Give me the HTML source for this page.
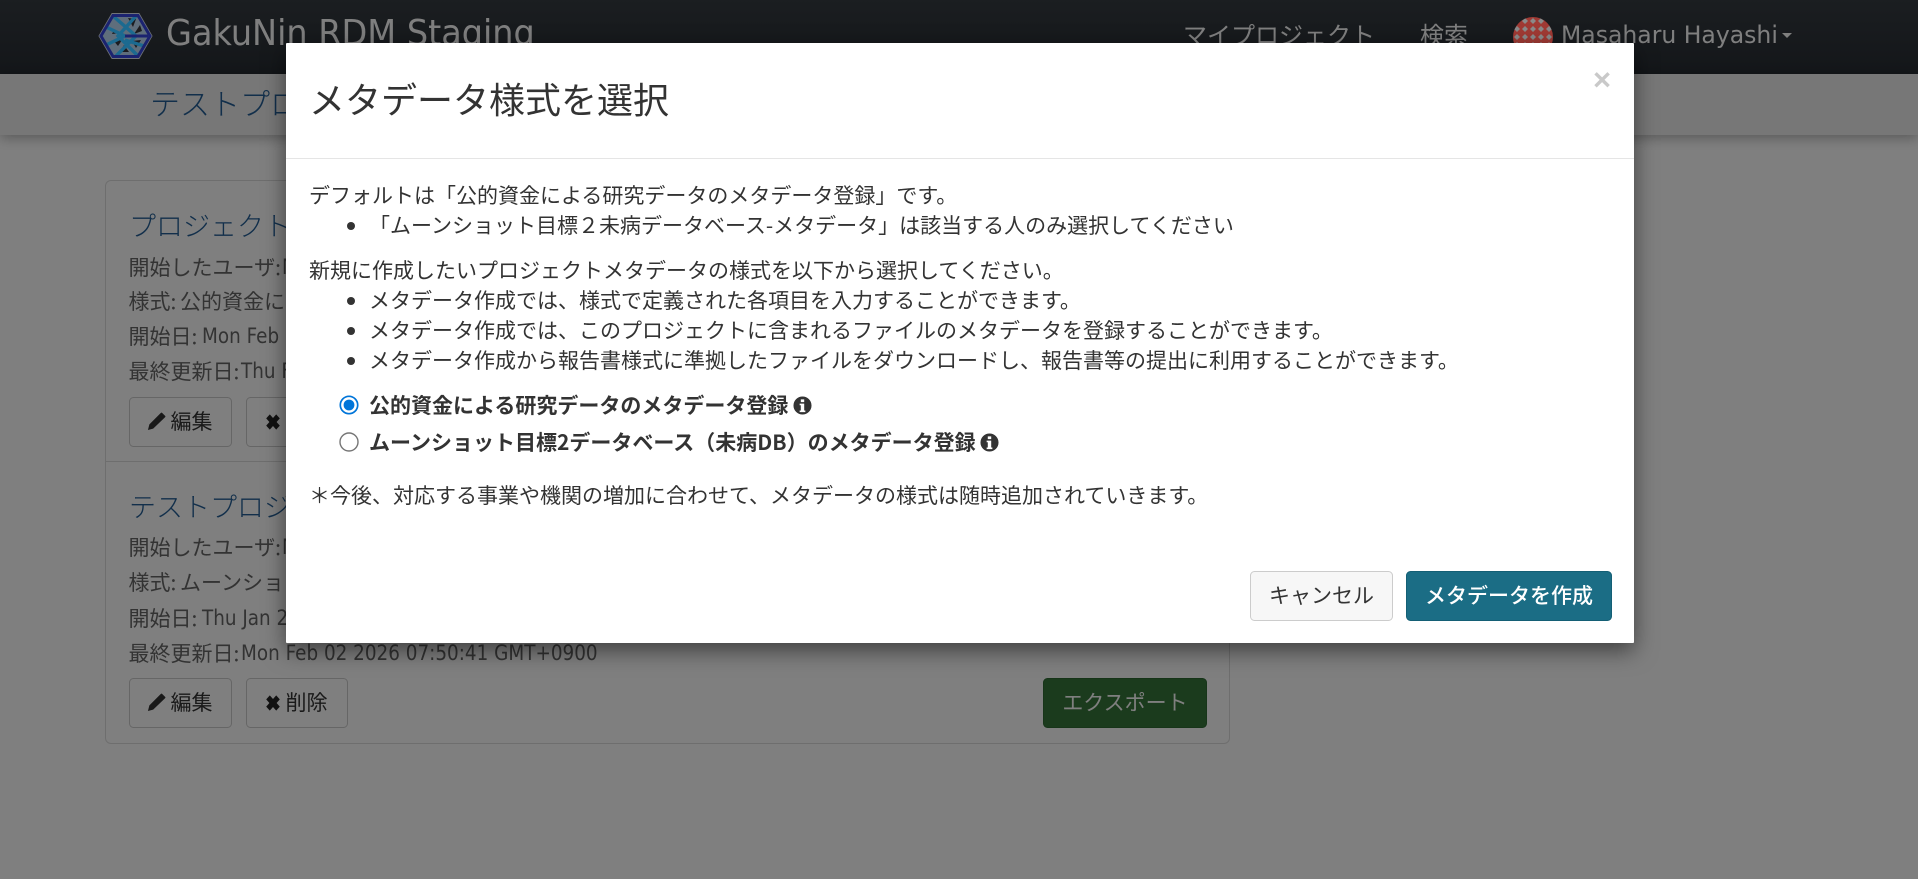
<!DOCTYPE html>
<html lang="ja"><head><meta charset="utf-8"><title>メタデータ様式を選択</title>
<style>
*{box-sizing:border-box}
html,body{margin:0;padding:0;width:1918px;height:879px;overflow:hidden;background:#fff}
body{font-family:"Liberation Sans","Noto Sans CJK JP",sans-serif;font-size:21px;color:#333;position:relative}
.t{position:absolute;white-space:nowrap;line-height:30px;font-family:"Noto Sans CJK JP",sans-serif}
.l{font-family:"DejaVu Sans",sans-serif;font-size:20.5px;transform:scaleX(.875);transform-origin:0 50%}
#nav{position:absolute;left:0;top:0;width:1918px;height:74px;background:linear-gradient(#363c42,#282d33)}
#sub{position:absolute;left:0;top:74px;width:1918px;height:61px;background:#eee;box-shadow:0 3px 12px rgba(0,0,0,.3)}
#panel{position:absolute;left:105px;top:180px;width:1125px;height:564px;border:1px solid #ddd;border-radius:6px;background:#fff}
#div{position:absolute;left:105px;top:461px;width:1125px;height:1px;background:#ddd}
.lnk{color:#245f96;font-size:27px;font-weight:300}
.g{color:#666;font-size:21px}
.btn{position:absolute;height:50px;border:1px solid #ccc;border-radius:4.5px;background:#fff;color:#333;font-family:"Noto Sans CJK JP",sans-serif;font-size:21px;line-height:46px;text-align:center;white-space:nowrap}
.btn svg{vertical-align:-2px;margin-right:5px}
.ic{padding-right:2px}
#bd{position:absolute;left:0;top:0;width:1918px;height:879px;background:rgba(0,0,0,.5)}
#modal{position:absolute;left:286px;top:43px;width:1348px;height:600px;background:#fff;border-radius:1px;box-shadow:0 7.5px 22.5px rgba(0,0,0,.5)}
#hr{position:absolute;left:286px;top:158px;width:1348px;height:1px;background:#e5e5e5}
.m{color:#333;font-size:21px}
.b{font-weight:700;color:#333}
.dot{position:absolute;left:347px;width:8px;height:8px;border-radius:50%;background:#333}
</style></head><body>
<div id="nav"></div>
<div class="t" style="left:166px;top:10px;line-height:48px;font-family:'DejaVu Sans',sans-serif;font-size:36px;transform:scaleX(.93);transform-origin:0 50%;color:#fff">GakuNin RDM Staging</div>
<div class="t" style="left:1183px;top:16px;font-size:24px;line-height:36px;color:#fff">マイプロジェクト</div>
<div class="t" style="left:1420px;top:16px;font-size:24px;line-height:36px;color:#fff">検索</div>
<div class="t" style="left:1561px;top:17px;font-family:'DejaVu Sans',sans-serif;font-size:24px;line-height:36px;color:#fff;transform:scaleX(.98);transform-origin:0 50%">Masaharu Hayashi</div>
<div style="position:absolute;left:1782px;top:33px;border-left:5.500px solid transparent;border-right:5.500px solid transparent;border-top:5.500px solid #fff"></div>

<div id="sub"></div>
<div class="t" style="left:150px;top:82px;font-size:30px;line-height:40px;color:#245f96;font-weight:300">テストプロジェクト</div>

<div id="panel"></div><div id="div"></div>
<div class="t lnk" style="left:129px;top:205px;line-height:40px">プロジェクトメタデータ</div>
<div class="t g" style="left:128.500px;top:252px">開始したユーザ:</div><div class="t g l" style="left:281.500px;top:252px">M</div>
<div class="t g" style="left:128.500px;top:286px">様式:</div><div class="t g" style="left:180px;top:286px">公的資金による</div>
<div class="t g" style="left:128.500px;top:321px">開始日:</div><div class="t g l" style="left:201.500px;top:321px">Mon Feb 02</div>
<div class="t g" style="left:128.500px;top:356px">最終更新日:</div><div class="t g l" style="left:240.500px;top:356px">Thu Feb</div>
<div class="btn ic" style="left:129px;top:397px;width:103px"><svg width="19" height="19" viewBox="0 0 20 20"><path d="M1 19l1.500-6L13 2.500l4.500 4.500L6.500 17.500zM14.500 1l1-.5 4 4-.5 1-1.500 1.500-4.500-4.500z" fill="#333"/></svg>編集</div>
<div class="btn ic" style="left:246px;top:397px;width:102px"><svg width="16" height="18" viewBox="0 0 20 20" preserveAspectRatio="none"><path d="M6 1.500L10 5.500 14 1.500 18.500 6 14.500 10 18.500 14 14 18.500 10 14.500 6 18.500 1.500 14 5.500 10 1.500 6z" fill="#222"/></svg>削除</div>

<div class="t lnk" style="left:129px;top:486px;line-height:40px">テストプロジェクト</div>
<div class="t g" style="left:128.500px;top:532px">開始したユーザ:</div><div class="t g l" style="left:281.500px;top:532px">M</div>
<div class="t g" style="left:128.500px;top:567px">様式:</div><div class="t g" style="left:180px;top:567px">ムーンショット</div>
<div class="t g" style="left:128.500px;top:603px">開始日:</div><div class="t g l" style="left:201.500px;top:603px">Thu Jan 22</div>
<div class="t g" style="left:128.500px;top:638px">最終更新日:</div><div class="t g l" style="left:240.500px;top:638px">Mon Feb 02 2026 07:50:41 GMT+0900</div>
<div class="btn ic" style="left:129px;top:678px;width:103px"><svg width="19" height="19" viewBox="0 0 20 20"><path d="M1 19l1.500-6L13 2.500l4.500 4.500L6.500 17.500zM14.500 1l1-.5 4 4-.5 1-1.500 1.500-4.500-4.500z" fill="#333"/></svg>編集</div>
<div class="btn ic" style="left:246px;top:678px;width:102px"><svg width="16" height="18" viewBox="0 0 20 20" preserveAspectRatio="none"><path d="M6 1.500L10 5.500 14 1.500 18.500 6 14.500 10 18.500 14 14 18.500 10 14.500 6 18.500 1.500 14 5.500 10 1.500 6z" fill="#222"/></svg>削除</div>
<div class="btn" style="left:1043px;top:678px;width:164px;background:#37763a;border-color:#2f6a32;color:#fff;line-height:47px">エクスポート</div>

<div id="bd"></div>
<svg style="position:absolute;left:98px;top:12px" width="55" height="48" viewBox="0 0 55 48">
<polygon points="1,24 14,1.500 41,1.500 54,24 41,46.500 14,46.500" fill="#5f6e7c" stroke="#6f7378" stroke-width="1"/>
<g fill="#1c1c20"><polygon points="30,6 38,7 35,15"/><polygon points="16,18 23,21 14,22"/><polygon points="44,19 36,22 42,13"/><polygon points="15,28 24,28 20,34"/><polygon points="34,29 43,28 38,36"/><polygon points="26,33 31,40 22,40"/></g>
<g stroke="#1c6a90" stroke-width="3.400" fill="none"><path d="M15 4L38 24L18 44"/><path d="M38 4L20 24L40 44"/><path d="M8 15L27 24L8 33"/><path d="M27 28L46 34"/></g>
<path d="M27 24H50" stroke="#1b2370" stroke-width="3"/>
<polygon points="3,24 15,3.500 40,3.500 52,24 40,44.500 15,44.500" fill="none" stroke="#1b2370" stroke-width="3"/>
</svg>
<svg style="position:absolute;left:1513px;top:17px" width="40" height="40" viewBox="0 0 40 40">
<defs><clipPath id="c"><circle cx="20" cy="20" r="20"/></clipPath><pattern id="p" width="8" height="8" patternUnits="userSpaceOnUse"><rect width="8" height="8" fill="#a03a34"/><polygon points="4,1 7,4 4,7 1,4" fill="#8a8a8a"/></pattern></defs>
<rect width="40" height="40" fill="url(#p)" clip-path="url(#c)"/></svg>
<div id="modal"></div><div id="hr"></div>
<div class="t" style="left:309px;top:70px;font-size:36px;line-height:56px;color:#333">メタデータ様式を選択</div>
<div class="t" style="left:1593px;top:60px;font-family:'Liberation Sans',sans-serif;font-size:31px;line-height:40px;font-weight:700;color:#c9c9c9">×</div>
<div class="t m" style="left:309px;top:180px">デフォルトは「公的資金による研究データのメタデータ登録」です。</div>
<div class="dot" style="top:222px"></div>
<div class="t m" style="left:369px;top:210px">「ムーンショット目標２未病データベース-メタデータ」は該当する人のみ選択してください</div>
<div class="t m" style="left:309px;top:255px">新規に作成したいプロジェクトメタデータの様式を以下から選択してください。</div>
<div class="dot" style="top:297px"></div>
<div class="t m" style="left:369px;top:285px">メタデータ作成では、様式で定義された各項目を入力することができます。</div>
<div class="dot" style="top:327px"></div>
<div class="t m" style="left:369px;top:315px">メタデータ作成では、このプロジェクトに含まれるファイルのメタデータを登録することができます。</div>
<div class="dot" style="top:357px"></div>
<div class="t m" style="left:369px;top:345px">メタデータ作成から報告書様式に準拠したファイルをダウンロードし、報告書等の提出に利用することができます。</div>
<svg style="position:absolute;left:339px;top:395px" width="20" height="20"><circle cx="10" cy="10" r="8.700" fill="#fff" stroke="#0075d9" stroke-width="1.700"/><circle cx="10" cy="10" r="5.400" fill="#0075d9"/></svg>
<div class="t m b" style="left:369px;top:390px">公的資金による研究データのメタデータ登録</div>
<svg style="position:absolute;left:793px;top:396px" width="19" height="19" viewBox="0 0 20 20"><path fill-rule="evenodd" d="M10 .5a9.500 9.500 0 1 0 0 19 9.500 9.500 0 0 0 0-19zM8.200 3.500h3.600v3H8.200zM7 8h4.800v7.200H13v1.800H7v-1.800h1.200V9.800H7z" fill="#333"/></svg>
<svg style="position:absolute;left:339px;top:432px" width="20" height="20"><circle cx="10" cy="10" r="9" fill="#fff" stroke="#767676" stroke-width="1.400"/></svg>
<div class="t m b" style="left:369px;top:427px">ムーンショット目標2データベース（未病DB）のメタデータ登録</div>
<svg style="position:absolute;left:980px;top:433px" width="19" height="19" viewBox="0 0 20 20"><path fill-rule="evenodd" d="M10 .5a9.500 9.500 0 1 0 0 19 9.500 9.500 0 0 0 0-19zM8.200 3.500h3.600v3H8.200zM7 8h4.800v7.200H13v1.800H7v-1.800h1.200V9.800H7z" fill="#333"/></svg>
<div class="t m" style="left:309px;top:480px">＊今後、対応する事業や機関の増加に合わせて、メタデータの様式は随時追加されていきます。</div>
<div class="btn" style="left:1250px;top:571px;width:143px;background:#f7f7f7;border-color:#ccc">キャンセル</div>
<div class="btn" style="left:1406px;top:571px;width:206px;background:#1b6d85;border-color:#145f75;color:#fff;font-weight:500">メタデータを作成</div>
</body></html>
